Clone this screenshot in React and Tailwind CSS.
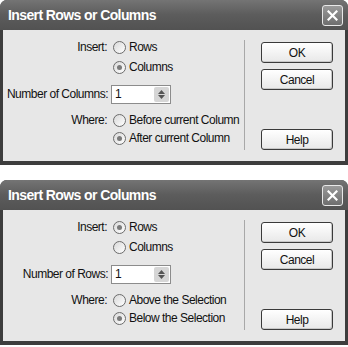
import React from 'react';

const font = { fontFamily: '"Liberation Sans", Arial, sans-serif' };

// Bouton radio façon XP (gris)
const Radio = ({ checked }) => (
  <span className="relative inline-flex h-[13px] w-[13px] shrink-0 items-center justify-center rounded-full border border-[#6b6b6b] bg-gradient-to-br from-[#d8d8d8] to-white">
    {checked && <span className="h-[5px] w-[5px] rounded-full bg-[#7a7a7a]" />}
  </span>
);

const RadioRow = ({ label, text, checked }) => (
  <div className="flex h-[18px] items-center whitespace-nowrap">
    <div className="w-[104px] shrink-0 pr-[1px] text-right">{label}</div>
    <div className="ml-[5px] flex items-center gap-[3px]">
      <Radio checked={checked} />
      <span>{text}</span>
    </div>
  </div>
);

const Button = ({ children, className = '' }) => (
  <div className={`flex h-[21px] w-[72px] items-center justify-center rounded-[3px] border border-[#3a3a3a] bg-gradient-to-b from-white to-[#e8e8e8] text-[12px] shadow-[inset_-1px_-1px_0_#c8c8c8] ${className}`}>
    {children}
  </div>
);

const SpinBox = () => (
  <div className="ml-[3px] flex h-[19px] w-[60px] items-center border border-[#8c8c8c] bg-white pl-[3px]">
    <span className="flex-1 text-[12px]">1</span>
    <div className="mr-[1px] flex h-[15px] w-[15px] flex-col items-center justify-center gap-[1px] rounded-[2px] bg-[#d6d6d6]">
      <svg width="7" height="4" viewBox="0 0 7 4"><path d="M0 4 L3.5 0 L7 4 Z" fill="#555" /></svg>
      <svg width="7" height="4" viewBox="0 0 7 4"><path d="M0 0 L3.5 4 L7 0 Z" fill="#555" /></svg>
    </div>
  </div>
);

const Dialog = ({ numberLabel, insertRows, whereA, whereB }) => (
  <div className="w-[348px] shrink-0 overflow-hidden rounded-t-[7px] bg-[#3d3d3d]">
    {/* Barre de titre */}
    <div className="flex h-[30px] items-center justify-between bg-gradient-to-b from-[#747474] via-[#5c5c5c] to-[#525252] pl-[8px] pr-[5px]">
      <span className="text-[14px] font-bold tracking-[-0.6px] text-white" style={font}>
        Insert Rows or Columns
      </span>
      <div className="flex h-[21px] w-[21px] items-center justify-center rounded-[3px] border border-[#e8e8e8] bg-gradient-to-b from-[#9a9a9a] to-[#6e6e6e]">
        <svg width="11" height="11" viewBox="0 0 11 11">
          <path d="M1.5 1.5 L9.5 9.5 M9.5 1.5 L1.5 9.5" stroke="white" strokeWidth="2.2" strokeLinecap="square" />
        </svg>
      </div>
    </div>

    {/* Contenu */}
    <div className="mx-[3px] mb-[4px] flex h-[131px] bg-[#e7e7e7] text-[12px] tracking-[-0.5px] text-[#111]" style={font}>
      <div className="w-[241px] pt-[8px] pl-[1px]">
        <RadioRow label="Insert:" text="Rows" checked={insertRows} />
        <div className="mt-[2px]">
          <RadioRow label="" text="Columns" checked={!insertRows} />
        </div>
        <div className="mt-[8px] flex h-[20px] items-center whitespace-nowrap">
          <div className="w-[104px] shrink-0 text-right">{numberLabel}</div>
          <SpinBox />
        </div>
        <div className="mt-[7px]">
          <RadioRow label="Where:" text={whereA} checked={false} />
        </div>
        <RadioRow label="" text={whereB} checked={true} />
      </div>

      {/* Séparateur */}
      <div className="mt-[10px] h-[110px] w-[1px] bg-[#a8a8a8]" />

      <div className="ml-[16px] flex flex-col pt-[12px]">
        <Button>OK</Button>
        <Button className="mt-[6px]">Cancel</Button>
        <Button className="mt-[39px]">Help</Button>
      </div>
    </div>
  </div>
);

export default function App() {
  return (
    <div className="flex h-[347px] w-[348px] flex-col gap-[15px] overflow-hidden bg-white">
      <Dialog
        numberLabel="Number of Columns:"
        insertRows={false}
        whereA="Before current Column"
        whereB="After current Column"
      />
      <Dialog
        numberLabel="Number of Rows:"
        insertRows={true}
        whereA="Above the Selection"
        whereB="Below the Selection"
      />
    </div>
  );
}
